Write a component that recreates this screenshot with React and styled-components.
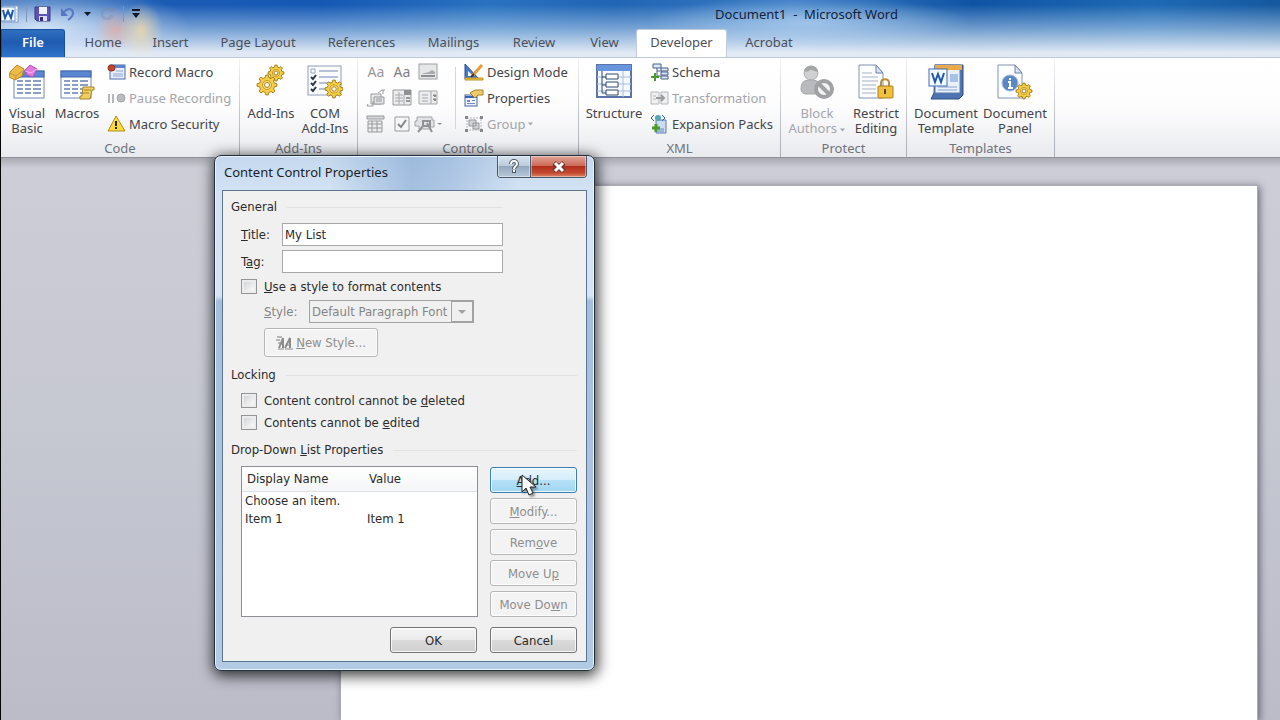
import React, { useState } from 'react'
import styled, { createGlobalStyle, css } from 'styled-components'

const GlobalStyle = createGlobalStyle`
    * {
        box-sizing: border-box;
    }
    body {
        margin: 0;
        background: #bdbec9;
        font-family: "Noto Sans", "Open Sans", sans-serif;
        font-size: 13px;
        color: #3b3b3b;
    }
    button, input, select {
        font: inherit;
        color: inherit;
    }
`;

/* ---------- window ---------- */

const Window = styled.div`
    position: relative;
    display: flex;
    flex-direction: column;
    min-height: 100vh;
    border-left: 1px solid #050505;
    overflow: hidden;
`;

const WindowTop = styled.header`
    background:
        radial-gradient(ellipse 22px 28px at 140px 30px, rgba(255, 222, 160, 0.7), transparent),
        radial-gradient(ellipse 20px 22px at 114px 30px, rgba(250, 165, 135, 0.55), transparent),
        radial-gradient(ellipse 150px 44px at 40px 28px, rgba(225, 238, 253, 0.85), transparent),
        radial-gradient(ellipse 160px 26px at 807px 22px, rgba(190, 218, 246, 0.6), transparent),
        linear-gradient(to bottom, rgba(255, 255, 255, 0) 8%, rgba(190, 214, 238, 0.55) 50%, rgba(236, 241, 248, 0.94) 92%),
        linear-gradient(to right, #1c5cb0 0%, #1b5bb4 12%, #1458b4 25%, #2a72c0 38%, #2065b4 48%, #3a7cc4 62%, #0f54a4 76%, #1e69b4 90%, #14589f 100%);
`;

const TitleBar = styled.div`
    display: flex;
    align-items: center;
    height: 29px;
    padding-bottom: 2px;
`;

const QuickAccess = styled.div`
    display: flex;
    align-items: center;
    gap: 7px;
    width: 332px;
    flex: none;
`;

const QuickButton = styled.button`
    display: flex;
    align-items: center;
    padding: 0;
    border: 0;
    background: none;
    opacity: ${props => props.$faded ? 0.35 : 1};
`;

const QuickLine = styled.span`
    width: 1px;
    height: 16px;
    background: #7d95b8;
`;

const WindowTitle = styled.h1`
    flex: 1;
    margin: 0;
    font-size: 13px;
    font-weight: 400;
    line-height: 26px;
    text-align: center;
    white-space: pre;
    color: #12203a;
`;

const Tabs = styled.nav`
    display: flex;
    align-items: flex-end;
    height: 28px;
`;

const Tab = styled.button`
    height: 28px;
    width: ${props => props.$width}px;
    padding: 0 0 3px;
    border: 1px solid transparent;
    border-bottom: 0;
    border-radius: 3px 3px 0 0;
    background: none;
    line-height: 24px;
    text-align: center;
    white-space: nowrap;
    color: #4a4f58;
    ${props => props.$active && css`
        background: #fff;
        border-color: #c3ccd8;
    `}
    ${props => props.$file && css`
        margin-right: 5px;
        background: linear-gradient(to bottom, #2f6fc0, #1f5bb0 45%, #2e74cc);
        border-color: #1c4f9c;
        border-radius: 0 3px 0 0;
        color: #fff;
        font-weight: 600;
    `}
`;

/* ---------- ribbon ---------- */

const Ribbon = styled.div`
    display: flex;
    height: 101px;
    border-top: 1px solid #c0cad8;
    border-bottom: 1px solid #8f929a;
    background: linear-gradient(to bottom, #fff 0%, #fdfdfe 50%, #e9eaee 100%);
`;

const Group = styled.section`
    display: flex;
    flex-direction: column;
    flex: none;
    width: ${props => props.$width}px;
    padding-top: 1px;
    border-right: 1px solid;
    border-image: linear-gradient(to bottom, #f4f5f8, #bfc3ca 60%, #a9adb6) 1;
`;

const GroupBody = styled.div`
    display: flex;
    flex: none;
    height: 78px;
    padding-left: ${props => props.$indent || 0}px;
`;

const GroupName = styled.h2`
    flex: none;
    margin: 0;
    font-size: 13px;
    font-weight: 400;
    line-height: 22px;
    text-align: center;
    color: #6f737c;
`;

const LargeButton = styled.button`
    display: flex;
    flex-direction: column;
    align-items: center;
    justify-content: flex-start;
    gap: 6px;
    flex: none;
    width: ${props => props.$width}px;
    padding: 5px 0 0;
    border: 0;
    background: none;
    line-height: 15px;
    white-space: pre;
    color: ${props => props.disabled ? '#a3a5aa' : '#43454a'};
`;

const SmallColumn = styled.div`
    display: flex;
    flex-direction: column;
    padding-left: ${props => props.$indent}px;
`;

const SmallButton = styled.button`
    display: flex;
    align-items: center;
    gap: 3px;
    height: 26px;
    padding: 0;
    border: 0;
    background: none;
    white-space: nowrap;
    color: ${props => props.disabled ? '#a3a5aa' : '#43454a'};
`;

const ControlsGrid = styled.div`
    display: grid;
    grid-template-columns: repeat(3, 26px);
    grid-auto-rows: 26px;
    place-items: center;
    padding-right: 14px;
`;

const IconButton = styled.button`
    display: flex;
    padding: 0;
    border: 0;
    background: none;
`;

const Letters = styled.span`
    font-size: 14px;
    line-height: 20px;
    color: ${props => props.$plain ? '#7d7f83' : '#98999d'};
`;

const InnerLine = styled.span`
    width: 1px;
    height: 62px;
    margin-top: 8px;
    background: #d3d6db;
`;

/* ---------- document ---------- */

const Workspace = styled.main`
    display: flex;
    flex: 1;
    padding: 27px 22px 0 339px;
    background: linear-gradient(to bottom, #a9aab2 0, #cdcdd7 10px, #c5c7d1 50%, #bbbcc8 100%);
`;

const Paper = styled.article`
    flex: 1;
    background: #fff;
    border: 1px solid #a9abb4;
    border-bottom: 0;
    box-shadow: 2px 1px 7px rgba(50, 50, 65, 0.6);
`;

/* ---------- dialog ---------- */

const Dialog = styled.div`
    position: absolute;
    left: 213px;
    top: 155px;
    width: 381px;
    padding: 0 7px 8px;
    border: 1px solid #23303f;
    border-radius: 7px;
    background:
        linear-gradient(to right, transparent 30%, rgba(110, 150, 200, 0.45) 52%, rgba(110, 150, 200, 0.35) 62%, transparent 80%) 0 0 / 100% 34px no-repeat,
        linear-gradient(to bottom, #c4d8ee 0, #d3e2f3 34px, #d6e4f4 140px, #a5bedd 145px, #b3cae5 100%);
    box-shadow: inset 0 0 0 1px #e9f3fc, 1px 3px 14px 2px rgba(0, 0, 0, 0.75);
    font-family: "DejaVu Sans Condensed", "DejaVu Sans", Tahoma, sans-serif;
    font-stretch: condensed;
    font-size: 13px;
    color: #2b2b2b;
`;

const DialogBar = styled.div`
    display: flex;
    justify-content: space-between;
    height: 34px;
`;

const DialogTitle = styled.h2`
    margin: 0 0 0 2px;
    font: 400 13px/33px "Noto Sans", "Open Sans", sans-serif;
    color: #1a1f28;
`;

const CaptionButtons = styled.div`
    display: flex;
    height: 22px;
    border: 1px solid #4b5a6b;
    border-top: 0;
    border-radius: 0 0 4px 4px;
    overflow: hidden;
`;

const CaptionButton = styled.button`
    display: flex;
    align-items: center;
    justify-content: center;
    width: ${props => props.$close ? 55 : 33}px;
    padding: 0;
    border: 0;
    background: ${props => props.$close
        ? 'linear-gradient(to bottom, #e2a598 0, #cd6a58 46%, #b22e1b 50%, #c24a30 80%, #dc8466 100%)'
        : 'linear-gradient(to bottom, #d9e3ee 0, #bccbdb 46%, #95a8be 50%, #b7c8da 100%)'};
    box-shadow: inset 0 0 0 1px rgba(255, 255, 255, 0.4);
    border-right: ${props => props.$close ? '0' : '1px solid #4b5a6b'};
`;

const DialogBody = styled.form`
    display: flex;
    flex-direction: column;
    padding: 6px 9px 8px 8px;
    border: 1px solid #5c7690;
    background: #f0f0f0;
`;

const SectionTitle = styled.h3`
    display: flex;
    align-items: center;
    gap: 10px;
    margin: 0;
    width: ${props => props.$short ? '272px' : '100%'};
    font-size: 13px;
    font-weight: 400;
    line-height: 20px;
    &::after {
        content: '';
        flex: 1;
        height: 1px;
        background: #e2e3e5;
    }
`;

const Fields = styled.div`
    display: flex;
    flex-direction: column;
    gap: 4px;
    margin: 6px 0 2px 10px;
`;

const Field = styled.div`
    display: flex;
    align-items: center;
`;

const FieldLabel = styled.label`
    width: ${props => props.$width}px;
    color: ${props => props.$dim ? '#858585' : 'inherit'};
`;

const TextBox = styled.input`
    width: 221px;
    height: 23px;
    padding: 0 2px;
    border: 1px solid #a8a8a8;
    background: #fff;
    outline: 0;
`;

const Checks = styled.div`
    margin: 4px 0 7px;
`;

const CheckRow = styled.label`
    display: flex;
    align-items: center;
    gap: 7px;
    height: 22px;
    margin-left: 10px;
`;

const CheckBox = styled.input`
    appearance: none;
    width: 16px;
    height: 15px;
    margin: 0;
    border: 1px solid #949494;
    background: linear-gradient(135deg, #c9ccd0, #f6f6f6 75%);
    box-shadow: inset 0 0 0 2px #ececec;
`;

const StyleFields = styled.div`
    display: flex;
    flex-direction: column;
    align-items: flex-start;
    gap: 5px;
    margin: 3px 0 8px 33px;
    color: #858585;
`;

const StyleLine = styled.div`
    display: flex;
    align-items: center;
`;

const SelectFrame = styled.div`
    display: flex;
    align-items: center;
    position: relative;
    width: 165px;
    height: 23px;
    border: 1px solid #a2a2a2;
    & > svg {
        position: absolute;
        right: 0;
        top: 0;
        pointer-events: none;
    }
`;

const Select = styled.select`
    appearance: none;
    width: 100%;
    height: 21px;
    padding: 0 22px 0 2px;
    border: 0;
    background: transparent;
    color: #858585;
    opacity: 1;
`;

const ListArea = styled.div`
    display: flex;
    gap: 12px;
    margin: 6px 0 10px 10px;
`;

const ListBox = styled.div`
    flex: 1;
    border: 1px solid #8c8f94;
    background: #fff;
`;

const ItemTable = styled.table`
    width: 100%;
    border-collapse: collapse;
    table-layout: fixed;
    line-height: 18px;
    th {
        height: 24px;
        padding: 0 5px;
        border-bottom: 1px solid #e0e1e3;
        background: linear-gradient(to bottom, #fff, #f4f5f6);
        font-weight: 400;
        text-align: left;
    }
    th:first-child {
        width: 122px;
    }
    td {
        height: 18px;
        padding: 0 3px;
    }
`;

const ButtonStack = styled.div`
    display: flex;
    flex-direction: column;
    gap: 5px;
    padding-top: 1px;
`;

const PushButton = styled.button`
    display: flex;
    align-items: center;
    justify-content: center;
    gap: 3px;
    width: ${props => props.$wide ? 114 : 87}px;
    height: ${props => props.$wide ? 29 : 26}px;
    padding: 0;
    border: 1px solid #757575;
    border-radius: 3px;
    background: linear-gradient(to bottom, #f4f4f4, #ebebeb 48%, #dadada 52%, #d0d0d0);
    box-shadow: inset 0 0 0 1px rgba(255, 255, 255, 0.8);
    &:disabled {
        border-color: #b4b6b8;
        background: #f3f3f3;
        color: #8e8e8e;
    }
    ${props => props.$hot && css`
        border-color: #3c7fb1;
        background: linear-gradient(to bottom, #e8f5fc, #d6eefb 48%, #b4e0f8 52%, #a2d5f0);
    `}
`;

const DialogFooter = styled.div`
    display: flex;
    justify-content: flex-end;
    gap: 13px;
`;

const Pointer = styled.svg`
    position: absolute;
    left: 519px;
    top: 473px;
    filter: drop-shadow(2px 2px 1px rgba(0, 0, 0, 0.4));
`;

/* ---------- icons ---------- */

const gearPath = (cx, cy, outer, inner, teeth) => {
    const points = [];
    for (let i = 0; i < teeth; i++) {
        [[-0.3, inner], [-0.17, outer], [0.17, outer], [0.3, inner]].forEach(([shift, r]) => {
            const a = (i + shift) / teeth * Math.PI * 2;
            points.push((cx + Math.cos(a) * r).toFixed(1) + ' ' + (cy + Math.sin(a) * r).toFixed(1));
        });
    }
    return 'M' + points.join('L') + 'Z';
};

const Gear = ({ cx, cy, r, hole = '#fff' }) => (
    <g stroke="#a8801c" strokeWidth="1">
        <path d={gearPath(cx, cy, r, r * 0.76, 8)} fill="#f6cf45" />
        <circle cx={cx} cy={cy} r={r * 0.45} fill="#fbe58a" stroke="#c79a26" />
        <circle cx={cx} cy={cy} r={r * 0.25} fill={hole} />
    </g>
);

const Icon = ({ size = 36, width, children }) => (
    <svg width={width || size} height={size} viewBox={`0 0 ${width || size} ${size}`} fill="none" aria-hidden="true">
        {children}
    </svg>
);

const Grid = ({ x, y, w, h }) => (
    <g>
        <rect x={x} y={y} width={w} height={h} fill="#fff" stroke="#7288b4" />
        <rect x={x} y={y} width={w} height="6" fill="#5b86d2" stroke="#3f66ae" />
        {[10, 14, 18, 22].map(row => (
            <path key={row} d={`M${x + 3} ${y + row}h6m2 0h6m2 0h${w - 22}`} stroke="#8b9fc6" strokeWidth="2" />
        ))}
    </g>
);

const WordLogo = () => (
    <Icon size={18}>
        <rect x="2" y="1" width="15" height="16" fill="#fff" stroke="#7f9cc8" />
        <path d="M15 5h1M15 8h1M15 11h1M15 14h1" stroke="#9db5d8" />
        <rect x="0" y="2" width="14" height="14" fill="#f4f8fd" stroke="#6d92c8" />
        <path d="M2 5l2 8 3-7 3 7 2-8" stroke="#1d58ac" strokeWidth="2" />
    </Icon>
);

const SaveIcon = () => (
    <Icon size={18}>
        <path d="M1 2h15v14H3l-2-2z" fill="#5c54b4" stroke="#3c3688" />
        <rect x="5" y="2" width="8" height="7" fill="#eef1fb" />
        <rect x="5" y="11" width="8" height="5" fill="#d9dcee" />
        <rect x="6" y="12" width="3" height="4" fill="#322c78" />
    </Icon>
);

const UndoIcon = () => (
    <Icon size={18}>
        <path d="M5 7c4-5 9-3 9 1 0 3-2 5-5 7" stroke="#5876c6" strokeWidth="2" />
        <path d="M2 3v8h7z" fill="#5876c6" />
    </Icon>
);

const RedoIcon = () => (
    <Icon size={18}>
        <path d="M13 5c-4-3-9-1-9 4s8 7 10 1" stroke="#7d8aa6" strokeWidth="3" />
        <path d="M10 7h7V1z" fill="#7d8aa6" />
    </Icon>
);

const VisualBasicIcon = () => (
    <Icon>
        <Grid x={5} y={7} w={30} h={27} />
        <path d="M1 8l7-7 7 4-2 7-7 4-6-3z" fill="#eebb48" stroke="#b98722" />
        <path d="M1 9l6 3 8-6M7 12l-1 4" stroke="#c99730" />
        <path d="M16 6l5-5 7 4-4 8-6-2z" fill="#e07be0" stroke="#b24eb6" />
        <path d="M16 7l6 2 6-4" stroke="#f6b4f4" />
    </Icon>
);

const MacrosIcon = () => (
    <Icon>
        <Grid x={2} y={7} w={30} h={27} />
        <path d="M24 23h11v3h-2l-2 9H21v-3h2z" fill="#f0cf63" stroke="#a8832a" />
        <path d="M25 26h7M24 29h6" stroke="#a8832a" />
    </Icon>
);

const RecordIcon = () => (
    <Icon size={18} width={19}>
        <rect x="3" y="2" width="15" height="14" fill="#e6edf9" stroke="#4c6ba6" />
        <rect x="3" y="2" width="15" height="3" fill="#5b83cc" />
        <path d="M9 8h7M6 11h10M6 13h10" stroke="#8fa6d0" />
        <rect x="1" y="2" width="7" height="6" rx="3" fill="#c3452f" stroke="#96301f" />
    </Icon>
);

const PauseIcon = () => (
    <Icon size={18} width={19}>
        <path d="M2 5v9M6 5v9" stroke="#b4b6ba" strokeWidth="2" />
        <circle cx="14" cy="9" r="4" fill="#b9bbbf" stroke="#a3a5a9" />
    </Icon>
);

const WarningIcon = () => (
    <Icon size={18} width={19}>
        <path d="M9 1l9 15H1z" fill="#fbdc3c" stroke="#b08d1a" strokeLinejoin="round" />
        <path d="M9 6v5M9 12v2" stroke="#26210c" strokeWidth="2" />
    </Icon>
);

const AddInsIcon = () => (
    <Icon>
        <Gear cx={23} cy={9} r={8} />
        <Gear cx={14} cy={21} r={10} />
    </Icon>
);

const ComAddInsIcon = () => (
    <Icon>
        <rect x="1" y="2" width="33" height="29" fill="#fbfcfe" stroke="#8d9bb8" />
        <path d="M12 7h19M12 13h19M12 19h12M12 25h8" stroke="#6f86b6" />
        <path d="M4 5h4v4H4z" stroke="#9aa6bc" />
        <path d="M4 13l2 2 3-4M4 19l2 2 3-4M4 25l2 2 3-4" stroke="#2b3446" strokeWidth="2" />
        <Gear cx={27} cy={25} r={9} />
    </Icon>
);

const PictureIcon = () => (
    <Icon size={18} width={20}>
        <rect x="1" y="1" width="18" height="15" fill="#e6e7e9" stroke="#9b9da1" />
        <path d="M3 12h14v2H3z" fill="#8c8e92" />
        <path d="M3 11l4-1 4-1 3-2 3 2v2H3z" fill="#a8aaae" />
    </Icon>
);

const BlocksIcon = () => (
    <Icon size={18} width={20}>
        <path d="M5 5h10v10H5z" fill="#e9eaec" stroke="#98999d" />
        <path d="M8 8h10v7H8z" fill="#e2e3e5" stroke="#98999d" />
        <path d="M1 17h6v-5M2 15l-1 2M12 4l4-3h3M17 1v4" stroke="#98999d" />
        <path d="M10 10h6M10 12h6" stroke="#98999d" />
    </Icon>
);

const ComboIcon = () => (
    <Icon size={18} width={20}>
        <path d="M1 1h18v15H1z" fill="#ececee" stroke="#98999d" />
        <path d="M12 1h7v5h-7z" fill="#8f9195" />
        <path d="M3 6h8M3 9h8M3 12h8M7 3v12M12 6v10" stroke="#a6a8ac" />
        <path d="M14 9h4M14 12h4" stroke="#98999d" strokeWidth="2" />
    </Icon>
);

const DropIcon = () => (
    <Icon size={18} width={20}>
        <path d="M1 2h18v13H1z" fill="#ececee" stroke="#a6a8ac" />
        <path d="M13 2v13M4 6h6M4 9h6M4 12h6" stroke="#a6a8ac" />
        <path d="M15 6h3l-1 2zM15 10h3l-1 2z" fill="#85878b" stroke="#85878b" />
    </Icon>
);

const DateIcon = () => (
    <Icon size={18} width={20}>
        <path d="M1 1h17v3H1z" fill="#d6d7da" stroke="#98999d" />
        <path d="M2 6h14v11H2z" fill="#ececee" stroke="#98999d" />
        <path d="M2 9h14M2 13h14M6 6v11M11 6v11" stroke="#98999d" />
    </Icon>
);

const CheckIcon = () => (
    <Icon size={18} width={20}>
        <path d="M3 2h14v14H3z" fill="#f6f6f7" stroke="#98999d" />
        <path d="M6 9l3 3 5-7" stroke="#85878b" strokeWidth="2" />
    </Icon>
);

const ToolsIcon = () => (
    <svg width="28" height="18" viewBox="0 0 28 18" fill="none" aria-hidden="true">
        <path d="M3 2h15v3h2v7h-4v2H5v-3H1V6h2z" fill="#e2e3e5" stroke="#a2a4a8" />
        <path d="M4 17l5-6M9 6h7v5H9zM13 8l5 9" stroke="#909296" strokeWidth="2" />
        <path d="M23 8h5l-2 2z" fill="#909296" />
    </svg>
);

const DesignIcon = () => (
    <Icon size={18} width={20}>
        <path d="M1 1v15h14z" fill="#4a79c8" stroke="#294f96" />
        <path d="M4 8v5h5z" fill="#fff" />
        <path d="M18 2L9 12" stroke="#e79a35" strokeWidth="3" />
        <path d="M10 11l-3 3" stroke="#473521" strokeWidth="2" />
        <path d="M1 15h18v2H1z" fill="#e9c44c" stroke="#bb9327" strokeWidth="1" />
    </Icon>
);

const PropertiesIcon = () => (
    <Icon size={18} width={20}>
        <rect x="1" y="6" width="12" height="11" fill="#eef3fb" stroke="#4866a4" />
        <path d="M1 7h12v2H1z" fill="#3c62ac" />
        <path d="M3 11h3v2H3zM8 11h3v1H8zM3 14h8v1H3z" fill="#6f8bc0" />
        <path d="M6 4l5-3h8v5h-5l-3 3-2-2z" fill="#eccb6c" stroke="#a8842c" />
    </Icon>
);

const GroupIcon = () => (
    <Icon size={18} width={20}>
        <path d="M3 3h14v12H3z" stroke="#b6b8bc" strokeDasharray="2 1" />
        <path d="M5 5h7v6H5zM9 8h6v6H9z" fill="#d3d4d7" stroke="#94969a" />
        <path d="M1 1h3v3H1zM16 1h3v3h-3zM1 14h3v3H1zM16 14h3v3h-3z" fill="#85878b" />
    </Icon>
);

const StructureIcon = () => (
    <Icon>
        <rect x="1" y="1" width="34" height="32" fill="#f6f9fe" stroke="#5a74a8" strokeWidth="2" />
        <rect x="1" y="1" width="34" height="6" fill="#6796de" />
        <path d="M27 7v26M1 13h34M1 20h34M1 27h34" stroke="#a9bee0" />
        <path d="M6 7v22h5M6 13h5M6 21h5" stroke="#2f4673" />
        <path d="M10 10h12v5H10zM10 18h12v5H10zM10 26h12v5H10z" fill="#fff" stroke="#33486f" />
    </Icon>
);

const SchemaIcon = () => (
    <Icon size={18} width={19}>
        <path d="M7 4v10M7 8h5M7 13h5" stroke="#44618f" />
        <path d="M3 1h8v4H3zM11 5h7v3h-7zM11 9h7v3h-7zM11 13h7v3h-7z" fill="#dfe8f6" stroke="#44618f" />
        <path d="M5 10v8M1 14h8" stroke="#4c9a2c" strokeWidth="2" />
    </Icon>
);

const TransformIcon = () => (
    <Icon size={18} width={19}>
        <path d="M1 3h8v12H1zM11 3h7v12h-7z" fill="#f0f0f2" stroke="#b4b6ba" />
        <path d="M3 7h3M3 10h3" stroke="#b4b6ba" />
        <path d="M6 9h7M11 6l3 3-3 3" stroke="#9a9ca0" strokeWidth="2" />
    </Icon>
);

const PacksIcon = () => (
    <Icon size={20} width={19}>
        <path d="M6 6h10v13H6z" fill="#cbdcf2" stroke="#5c7cb2" />
        <path d="M8 15h6M8 17h6" stroke="#6d8bbd" />
        <path d="M4 1L1 4l3 3M12 1l3 3-3 3" stroke="#2f5da8" />
        <circle cx="8" cy="4" r="3" fill="#58a8b8" />
        <path d="M6 10v8M2 14h8" stroke="#4c9a2c" strokeWidth="3" />
    </Icon>
);

const BlockIcon = () => (
    <Icon>
        <circle cx="12" cy="9" r="7" fill="#cfd0d2" stroke="#b0b1b4" />
        <path d="M5 7c2-7 13-7 14 1-4 0-6-3-8-2-2 2-4 2-6 1z" fill="#a4a5a8" />
        <path d="M2 25c0-8 4-9 10-9s9 2 9 6l-3 8H7c-3 0-5-2-5-5z" fill="#b9babd" stroke="#a6a7aa" />
        <circle cx="25" cy="25" r="8" fill="#f4f4f5" stroke="#a0a1a4" strokeWidth="4" />
        <path d="M19 19l12 12" stroke="#a0a1a4" strokeWidth="4" />
    </Icon>
);

const Sheet = () => (
    <g>
        <path d="M1 1h17l7 8v25H1z" fill="#fcfdff" stroke="#8494b2" />
        <path d="M18 1v8h7z" fill="#dbe4f2" stroke="#6c80a6" />
    </g>
);

const RestrictIcon = () => (
    <Icon>
        <Sheet />
        <path d="M4 9h10M4 13h16M4 17h16M4 21h14M4 25h14M4 29h14" stroke="#a6b2c8" />
        <path d="M23 23v-4c0-5 8-5 8 0v4" stroke="#b8903a" strokeWidth="2" />
        <rect x="20" y="22" width="15" height="12" rx="1" fill="#f0c040" stroke="#a97f1e" />
        <path d="M27 25v5" stroke="#5f4612" strokeWidth="2" />
    </Icon>
);

const TemplateIcon = () => (
    <Icon>
        <path d="M7 1h28v30l-4 4H3l3-6z" fill="#4d74ae" stroke="#2f5088" />
        <rect x="7" y="1" width="25" height="28" fill="#eaf1fb" stroke="#5c7dae" />
        <rect x="7" y="1" width="27" height="5" fill="#eba94b" />
        <path d="M22 10h8v8h-8z" fill="#a8c1e6" />
        <path d="M10 23h19M10 26h19" stroke="#8aa5cf" />
        <rect x="1" y="5" width="18" height="17" fill="#f6faff" stroke="#3f6cb2" />
        <path d="M4 9l3 9 3-8 3 8 3-9" stroke="#1d58ac" strokeWidth="2" />
    </Icon>
);

const PanelIcon = () => (
    <Icon>
        <Sheet />
        <circle cx="13" cy="19" r="8" fill="#5b87c6" stroke="#a3bce0" />
        <path d="M13 14v2M11 18h2v6M11 24h5" stroke="#fff" strokeWidth="2" />
        <Gear cx={27} cy={27} r={8} />
    </Icon>
);

const Arrow = styled.svg`
    vertical-align: middle;
`;

const Caret = ({ color = '#a3a5aa', width = 5 }) => (
    <Arrow width={width} height="4" viewBox="0 0 7 4" aria-hidden="true">
        <path d="M0 0h7L3.5 4z" fill={color} />
    </Arrow>
);

const NewStyleIcon = () => (
    <svg width="17" height="16" viewBox="0 0 17 16" fill="none" aria-hidden="true">
        <path d="M1 2h5M0 5h4M2 8h2" stroke="#b8b8b8" strokeWidth="2" />
        <path d="M3 13l4-10v10M9 13l5-10v10" stroke="#8c8c8c" strokeWidth="2" />
        <path d="M5 9h3M10 10h4M2 14h6M9 14h8" stroke="#8c8c8c" />
    </svg>
);

/* ---------- data ---------- */

const tabs = [
    { name: 'File', width: 64, file: true },
    { name: 'Home', width: 66 },
    { name: 'Insert', width: 69 },
    { name: 'Page Layout', width: 106 },
    { name: 'References', width: 101 },
    { name: 'Mailings', width: 83 },
    { name: 'Review', width: 78 },
    { name: 'View', width: 63 },
    { name: 'Developer', width: 91 },
    { name: 'Acrobat', width: 84 }
];

const controls = [
    ['Rich Text', <Letters>Aa</Letters>], ['Plain Text', <Letters $plain>Aa</Letters>], ['Picture', <PictureIcon />],
    ['Building Block', <BlocksIcon />], ['Combo Box', <ComboIcon />], ['Drop-Down List', <DropIcon />],
    ['Date Picker', <DateIcon />], ['Check Box', <CheckIcon />], ['Legacy Tools', <ToolsIcon />]
];

const items = [
    { name: 'Choose an item.', value: '' },
    { name: 'Item 1', value: 'Item 1' }
];

const RibbonGroup = ({ name, width, indent, children }) => (
    <Group $width={width}>
        <GroupBody $indent={indent}>{children}</GroupBody>
        <GroupName>{name}</GroupName>
    </Group>
);

const DeveloperRibbon = () => (
    <Ribbon>
        <RibbonGroup name="Code" width={239}>
            <LargeButton $width={52}><VisualBasicIcon /><span>{'Visual\nBasic'}</span></LargeButton>
            <LargeButton $width={48}><MacrosIcon /><span>Macros</span></LargeButton>
            <SmallColumn $indent={6}>
                <SmallButton><RecordIcon />Record Macro</SmallButton>
                <SmallButton disabled><PauseIcon />Pause Recording</SmallButton>
                <SmallButton><WarningIcon />Macro Security</SmallButton>
            </SmallColumn>
        </RibbonGroup>
        <RibbonGroup name="Add-Ins" width={118} indent={5}>
            <LargeButton $width={52}><AddInsIcon /><span>Add-Ins</span></LargeButton>
            <LargeButton $width={56}><ComAddInsIcon /><span>{'COM\nAdd-Ins'}</span></LargeButton>
        </RibbonGroup>
        <RibbonGroup name="Controls" width={221} indent={5}>
            <ControlsGrid>
                {controls.map(([label, icon]) => (
                    <IconButton key={label} aria-label={label} disabled>{icon}</IconButton>
                ))}
            </ControlsGrid>
            <InnerLine />
            <SmallColumn $indent={8}>
                <SmallButton><DesignIcon />Design Mode</SmallButton>
                <SmallButton><PropertiesIcon />Properties</SmallButton>
                <SmallButton disabled><GroupIcon />Group <Caret /></SmallButton>
            </SmallColumn>
        </RibbonGroup>
        <RibbonGroup name="XML" width={202}>
            <LargeButton $width={70}><StructureIcon /><span>Structure</span></LargeButton>
            <SmallColumn $indent={1}>
                <SmallButton><SchemaIcon />Schema</SmallButton>
                <SmallButton disabled><TransformIcon />Transformation</SmallButton>
                <SmallButton><PacksIcon />Expansion Packs</SmallButton>
            </SmallColumn>
        </RibbonGroup>
        <RibbonGroup name="Protect" width={126}>
            <LargeButton $width={72} disabled><BlockIcon /><span>{'Block\nAuthors '}<Caret /></span></LargeButton>
            <LargeButton $width={46}><RestrictIcon /><span>{'Restrict\nEditing'}</span></LargeButton>
        </RibbonGroup>
        <RibbonGroup name="Templates" width={148} indent={4}>
            <LargeButton $width={70}><TemplateIcon /><span>{'Document\nTemplate'}</span></LargeButton>
            <LargeButton $width={68}><PanelIcon /><span>{'Document\nPanel'}</span></LargeButton>
        </RibbonGroup>
    </Ribbon>
);

const PropertiesDialog = () => {
    const [title, setTitle] = useState('My List');
    const [tag, setTag] = useState('');

    return (
        <Dialog role="dialog" aria-labelledby="dialog-title">
            <DialogBar>
                <DialogTitle id="dialog-title">Content Control Properties</DialogTitle>
                <CaptionButtons>
                    <CaptionButton aria-label="Help">
                        <svg width="12" height="15" viewBox="0 0 12 15" fill="none">
                            <path d="M3 5c0-4 6-4 6 0 0 2-3 2-3 5M6 11v3" stroke="#4a5563" strokeWidth="4" />
                            <path d="M3 5c0-4 6-4 6 0 0 2-3 2-3 5M6 11v2" stroke="#fff" strokeWidth="2" />
                        </svg>
                    </CaptionButton>
                    <CaptionButton $close aria-label="Close">
                        <svg width="14" height="12" viewBox="0 0 14 12" fill="none">
                            <path d="M2 2l10 8M12 2L2 10" stroke="#6b3a38" strokeWidth="5" />
                            <path d="M3 2l8 8M11 2l-8 8" stroke="#fff" strokeWidth="3" />
                        </svg>
                    </CaptionButton>
                </CaptionButtons>
            </DialogBar>
            <DialogBody onSubmit={e => e.preventDefault()}>
                <SectionTitle $short>General</SectionTitle>
                <Fields>
                    <Field>
                        <FieldLabel $width={41} htmlFor="title"><u>T</u>itle:</FieldLabel>
                        <TextBox id="title" value={title} onChange={e => setTitle(e.target.value)} />
                    </Field>
                    <Field>
                        <FieldLabel $width={41} htmlFor="tag">T<u>a</u>g:</FieldLabel>
                        <TextBox id="tag" value={tag} onChange={e => setTag(e.target.value)} />
                    </Field>
                </Fields>
                <CheckRow><CheckBox type="checkbox" /><span><u>U</u>se a style to format contents</span></CheckRow>
                <StyleFields>
                    <StyleLine>
                        <FieldLabel $width={45} $dim htmlFor="style"><u>S</u>tyle:</FieldLabel>
                        <SelectFrame>
                            <Select id="style" disabled>
                                <option>Default Paragraph Font</option>
                            </Select>
                            <svg width="22" height="21" viewBox="0 0 22 21" fill="none">
                                <path d="M0 0h22v21H0z" stroke="#a2a2a2" strokeWidth="2" />
                                <path d="M7 9h8l-4 4z" fill="#a2a2a2" />
                            </svg>
                        </SelectFrame>
                    </StyleLine>
                    <PushButton $wide disabled><NewStyleIcon /><span><u>N</u>ew Style...</span></PushButton>
                </StyleFields>
                <SectionTitle>Locking</SectionTitle>
                <Checks>
                    <CheckRow><CheckBox type="checkbox" /><span>Content control cannot be <u>d</u>eleted</span></CheckRow>
                    <CheckRow><CheckBox type="checkbox" /><span>Contents cannot be <u>e</u>dited</span></CheckRow>
                </Checks>
                <SectionTitle><span>Drop-Down <u>L</u>ist Properties</span></SectionTitle>
                <ListArea>
                    <ListBox>
                        <ItemTable>
                            <thead>
                                <tr><th>Display Name</th><th>Value</th></tr>
                            </thead>
                            <tbody>
                                {items.map(item => (
                                    <tr key={item.name}><td>{item.name}</td><td>{item.value}</td></tr>
                                ))}
                            </tbody>
                        </ItemTable>
                    </ListBox>
                    <ButtonStack>
                        <PushButton $hot><span><u>A</u>dd...</span></PushButton>
                        <PushButton disabled><span><u>M</u>odify...</span></PushButton>
                        <PushButton disabled><span>Rem<u>o</u>ve</span></PushButton>
                        <PushButton disabled><span>Move U<u>p</u></span></PushButton>
                        <PushButton disabled><span>Move Do<u>w</u>n</span></PushButton>
                    </ButtonStack>
                </ListArea>
                <DialogFooter>
                    <PushButton>OK</PushButton>
                    <PushButton>Cancel</PushButton>
                </DialogFooter>
            </DialogBody>
        </Dialog>
    );
};

const App = () => (
    <>
        <GlobalStyle />
        <Window>
            <WindowTop>
                <TitleBar>
                    <QuickAccess>
                        <WordLogo />
                        <QuickLine />
                        <QuickButton aria-label="Save"><SaveIcon /></QuickButton>
                        <QuickButton aria-label="Undo"><UndoIcon /></QuickButton>
                        <QuickButton aria-label="Undo list"><Caret color="#10182a" width={7} /></QuickButton>
                        <QuickButton aria-label="Redo" $faded><RedoIcon /></QuickButton>
                        <QuickLine />
                        <QuickButton aria-label="Customize">
                            <Icon size={10}>
                                <path d="M1 1h8" stroke="#10182a" strokeWidth="2" />
                                <path d="M1 4h8L5 9z" fill="#10182a" />
                            </Icon>
                        </QuickButton>
                    </QuickAccess>
                    <WindowTitle>{'Document1  -  Microsoft Word'}</WindowTitle>
                </TitleBar>
                <Tabs>
                    {tabs.map(tab => (
                        <Tab key={tab.name} $width={tab.width} $file={tab.file} $active={tab.name === 'Developer'}>
                            {tab.name}
                        </Tab>
                    ))}
                </Tabs>
            </WindowTop>
            <DeveloperRibbon />
            <Workspace>
                <Paper />
            </Workspace>
            <PropertiesDialog />
            <Pointer width="18" height="26" viewBox="0 0 18 26">
                <path d="M2 2v17l4-4 3 7 4-2-3-6h6z" fill="#fff" stroke="#222" />
            </Pointer>
        </Window>
    </>
);

export default App
